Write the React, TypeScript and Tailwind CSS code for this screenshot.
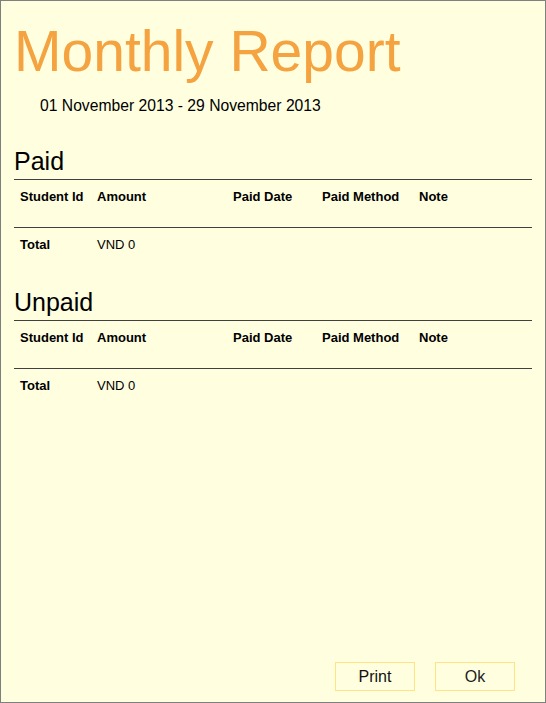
import React from "react";

const cols = "grid grid-cols-[77px_136px_89px_97px_1fr] pl-[6px]";

function Section({ title }: { title: string }) {
  return (
    <div className="flex flex-col">
      <div className="text-[25px] leading-[25px] text-black">{title}</div>
      <div className="mt-[5px] border-t border-[#404040]" />
      <div className={`${cols} pt-[9px] text-[13px] leading-[15px] font-bold text-black`}>
        <div>Student Id</div>
        <div>Amount</div>
        <div>Paid Date</div>
        <div>Paid Method</div>
        <div>Note</div>
      </div>
      <div className="mt-[23px] border-t border-[#404040]" />
      <div className={`${cols} pt-[9px] text-[13px] leading-[15px] text-black`}>
        <div className="font-bold">Total</div>
        <div>VND 0</div>
      </div>
    </div>
  );
}

export default function App() {
  return (
    <div className="w-[546px] h-[703px] border border-[#7f7f7f] bg-[#ffffe0] flex flex-col px-[13px] font-['Liberation_Sans',Arial,sans-serif]">
      <div className="mt-[22px] ml-[0px] text-[57px] leading-[57px] text-[#f4a340]">Monthly Report</div>
      <div className="mt-[17px] ml-[26px] text-[15.7px] leading-[18px] text-black">
        01 November 2013 - 29 November 2013
      </div>
      <div className="mt-[34px]">
        <Section title="Paid" />
      </div>
      <div className="mt-[38px]">
        <Section title="Unpaid" />
      </div>
      <div className="mt-auto mb-[11px] mr-[17px] flex justify-end gap-[20px]">
        <button className="w-[80px] h-[29px] border border-[#ffe384] bg-[#ffffe0] text-[16px] leading-[18px] text-[#111]">
          Print
        </button>
        <button className="w-[80px] h-[29px] border border-[#ffe384] bg-[#ffffe0] text-[16px] leading-[18px] text-[#222]">
          Ok
        </button>
      </div>
    </div>
  );
}
